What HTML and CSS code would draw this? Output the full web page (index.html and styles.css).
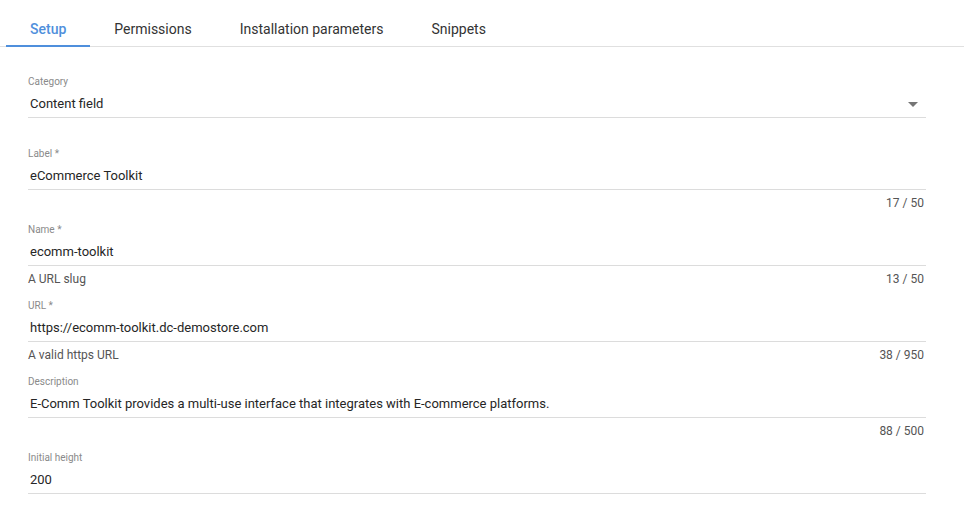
FILE: index.html
```html
<!DOCTYPE html>
<html>
<head>
<meta charset="utf-8">
<link rel="stylesheet" href="styles.css">
</head>
<body>
<nav class="tabs">
  <div class="tab active">Setup</div>
  <div class="tab">Permissions</div>
  <div class="tab">Installation parameters</div>
  <div class="tab">Snippets</div>
</nav>
<form class="form">
  <div class="field select-field">
    <label class="label">Category</label>
    <div class="input">
      <span>Content field</span>
      <svg class="arrow" width="10" height="5" viewBox="0 0 10 5"><path d="M0 0h10L5 5z" fill="#757575"/></svg>
    </div>
  </div>
  <div class="field">
    <label class="label">Label *</label>
    <div class="input">eCommerce Toolkit</div>
    <div class="helper"><span></span><span class="count">17 / 50</span></div>
  </div>
  <div class="field">
    <label class="label">Name *</label>
    <div class="input">ecomm-toolkit</div>
    <div class="helper"><span>A URL slug</span><span class="count">13 / 50</span></div>
  </div>
  <div class="field">
    <label class="label">URL *</label>
    <div class="input">https://ecomm-toolkit.dc-demostore.com</div>
    <div class="helper"><span>A valid https URL</span><span class="count">38 / 950</span></div>
  </div>
  <div class="field">
    <label class="label">Description</label>
    <div class="input">E-Comm Toolkit provides a multi-use interface that integrates with E-commerce platforms.</div>
    <div class="helper"><span></span><span class="count">88 / 500</span></div>
  </div>
  <div class="field">
    <label class="label">Initial height</label>
    <div class="input">200</div>
  </div>
</form>
</body>
</html>
```
FILE: styles.css
```css
html, body {
  margin: 0;
  padding: 0;
  background: #fff;
  font-family: Roboto, "Liberation Sans", Arial, sans-serif;
  color: #333;
}

.tabs {
  display: flex;
  padding-left: 6px;
  border-bottom: 1px solid #e0e0e0;
}

.tab {
  padding: 19px 24px 6px;
  line-height: 20px;
  font-size: 14px;
  color: #333;
  border-bottom: 2px solid transparent;
  margin-bottom: -1px;
}

.tab.active {
  color: #4f8fdc;
  font-weight: 500;
  border-bottom-color: #4f8fdc;
}

.form {
  display: flex;
  flex-direction: column;
  padding: 29px 0 0 28px;
  width: 898px;
}

.field {
  display: flex;
  flex-direction: column;
  margin-bottom: 14px;
}

.select-field {
  margin-bottom: 30px;
}

.label {
  font-size: 10px;
  line-height: 12px;
  color: #8a8a8a;
}

.input {
  display: flex;
  align-items: center;
  justify-content: space-between;
  padding: 6px 8px 3px 2px;
  font-size: 13px;
  line-height: 20px;
  color: #262626;
  border-bottom: 1px solid #dcdcdc;
}

.arrow {
  display: block;
}

.helper {
  display: flex;
  justify-content: space-between;
  margin-top: 6px;
  padding-right: 2px;
  font-size: 12px;
  line-height: 14px;
  color: #555;
}
```
